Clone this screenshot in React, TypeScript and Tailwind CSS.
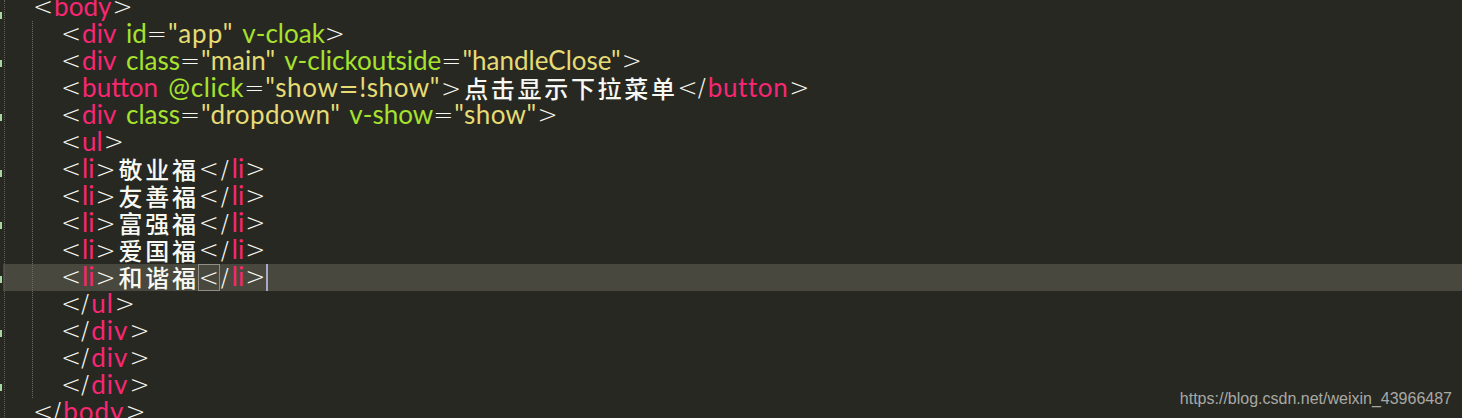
import React from "react";

const P = ({ children }: { children: React.ReactNode }) => (
  <span className="text-[#f8f8f2] font-['DejaVu_Sans',sans-serif] text-[24px] font-light">{children}</span>
);
const T = ({ children, className = "" }: { children: React.ReactNode; className?: string }) => (
  <span className={`mx-[1px] text-[#f92672] ${className}`}>{children}</span>
);
const A = ({ children, className = "" }: { children: React.ReactNode; className?: string }) => (
  <span className={`text-[#a6e22e] ${className}`}>{children}</span>
);
const S = ({ children, className = "" }: { children: React.ReactNode; className?: string }) => (
  <span className={`px-[1px] text-[#e6db74] ${className}`}>{children}</span>
);
const C = ({ children }: { children: React.ReactNode }) => (
  <span className="text-[#f8f8f2] text-[24px] tracking-[2.67px] font-medium font-['Noto_Sans_CJK_SC',sans-serif]">
    {children}
  </span>
);

const Line = ({
  children,
  active,
  outer,
}: {
  children: React.ReactNode;
  active?: boolean;
  outer?: boolean;
}) => (
  <div
    className={`flex h-[27px] items-center whitespace-pre [word-spacing:2px] ml-[3px] pb-[2px] ${
      outer ? "pl-[30px]" : "pl-[58px]"
    } ${active ? "bg-[#49483e]" : ""}`}
  >
    {children}
  </div>
);

const CloseLine = ({ name, outer }: { name: string; outer?: boolean }) => (
  <Line outer={outer}>
    <P>&lt;/</P>
    <T className="tracking-[1px] ml-[2px]">{name}</T>
    <P>&gt;</P>
  </Line>
);

const LiLine = ({ text, active }: { text: string; active?: boolean }) => (
  <Line active={active}>
    <P>&lt;</P>
    <T>li</T>
    <span className="mr-[3px]">
      <P>&gt;</P>
    </span>
    <C>{text}</C>
    {active ? (
      <span className="-mx-px -mb-[2px] h-[27px] border border-[#8f8f88] leading-[23px]">
        <P>&lt;</P>
      </span>
    ) : (
      <P>&lt;</P>
    )}
    <span className="mx-[2px]">
      <P>/</P>
    </span>
    <T>li</T>
    <P>&gt;</P>
    {active && <span className="-mb-[2px] ml-[1px] h-[27px] w-[2px] bg-[#a9a9c9]" />}
  </Line>
);

const greenMarks = [12, 60, 114, 170, 222, 276, 330, 384];

export default function App() {
  return (
    <div className="relative h-[418px] w-[1462px] overflow-hidden bg-[#272822] font-['Lato',sans-serif] text-[26px]">
      <div className="mt-[-6px]">
        <Line outer>
          <P>&lt;</P>
          <T>body</T>
          <P>&gt;</P>
        </Line>
        <Line>
          <P>&lt;</P>
          <T>div</T>
          <A> id</A>
          <P>=</P>
          <S className="tracking-[1px]">"app"</S>
          <A> v-cloak</A>
          <P>&gt;</P>
        </Line>
        <Line>
          <P>&lt;</P>
          <T>div</T>
          <A> class</A>
          <P>=</P>
          <S>"main"</S>
          <A> v-clickoutside</A>
          <P>=</P>
          <S>"handleClose"</S>
          <P>&gt;</P>
        </Line>
        <Line>
          <P>&lt;</P>
          <T>button</T>
          <A className="tracking-[0.6px]"> @click</A>
          <P>=</P>
          <S className="tracking-[0.6px]">
            "show<span className="font-['DejaVu_Sans',sans-serif] text-[24px]">=</span>!show"
          </S>
          <span className="mr-[3px]">
            <P>&gt;</P>
          </span>
          <C>点击显示下拉菜单</C>
          <P>&lt;/</P>
          <T className="tracking-[0.6px] ml-[2px]">button</T>
          <P>&gt;</P>
        </Line>
        <Line>
          <P>&lt;</P>
          <T>div</T>
          <A> class</A>
          <P>=</P>
          <S className="tracking-[0.4px]">"dropdown"</S>
          <A> v-show</A>
          <P>=</P>
          <S className="tracking-[0.4px]">"show"</S>
          <P>&gt;</P>
        </Line>
        <Line>
          <P>&lt;</P>
          <T>ul</T>
          <P>&gt;</P>
        </Line>
        <LiLine text="敬业福" />
        <LiLine text="友善福" />
        <LiLine text="富强福" />
        <LiLine text="爱国福" />
        <LiLine text="和谐福" active />
        <CloseLine name="ul" />
        <CloseLine name="div" />
        <CloseLine name="div" />
        <CloseLine name="div" />
        <CloseLine name="body" outer />
      </div>

      {/* indent guides */}
      <div className="absolute left-[4px] top-0 h-[418px] border-l border-dotted border-[#5f5f58]" />
      <div className="absolute left-[32px] top-[21px] h-[377px] border-l border-dotted border-[#6b6b64]" />

      {/* git gutter marks */}
      {greenMarks.map((y) => (
        <div
          key={y}
          className="absolute left-0 h-[7px] w-[2px] bg-[#a6d8a0]"
          style={{ top: y }}
        />
      ))}

      <div className="absolute right-[10px] top-[389px] font-['Liberation_Sans',sans-serif] text-[16px] leading-[20px] text-[#a9a9a5]">
        https://blog.csdn.net/weixin_43966487
      </div>
    </div>
  );
}
